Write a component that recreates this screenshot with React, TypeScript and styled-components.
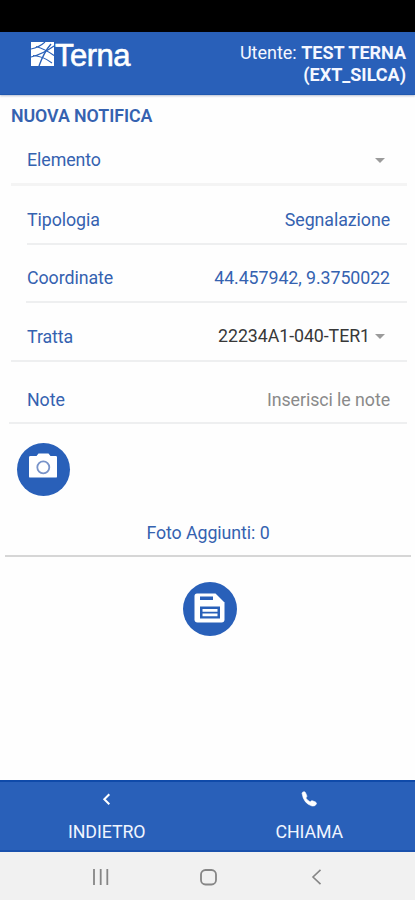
import React from "react";
import styled, { createGlobalStyle } from "styled-components";

const GlobalStyle = createGlobalStyle`
  * { box-sizing: border-box; }
  body { margin: 0; background: #fff; }
`;

const BLUE = "#2960b9";
const TEXT_BLUE = "#3562b0";

const Screen = styled.div`
  display: flex;
  flex-direction: column;
  width: 415px;
  height: 900px;
  overflow: hidden;
  background: #fefefe;
  color: ${TEXT_BLUE};
  font-family: Roboto, "Liberation Sans", sans-serif;
  font-size: 17.8px;
  line-height: 20px;
  letter-spacing: -0.07px;
  white-space: nowrap;
`;

const StatusBar = styled.div`
  flex: none;
  height: 32px;
  background: #000;
`;

const Header = styled.header`
  flex: none;
  display: flex;
  justify-content: space-between;
  height: 63px;
  padding: 10px 9px 0 31px;
  background: ${BLUE};
  border-bottom: 1px solid #2058b0;
  box-shadow: 0 1px 2px rgba(50, 70, 120, 0.35);
  color: #f4f7ff;
`;

const Brand = styled.div`
  display: flex;
  align-items: flex-start;
  gap: 1px;
  height: 26px;
  color: #fff;

  svg { display: block; }
`;

const BrandName = styled.span`
  font-family: "Liberation Sans", Arial, sans-serif;
  font-size: 31px;
  line-height: 27px;
  letter-spacing: -0.5px;
  -webkit-text-stroke: 0.6px #fff;
`;

const User = styled.div`
  text-align: right;
  font-size: 18px;
  line-height: 21.5px;
  letter-spacing: 0;

  b { font-weight: 700; }
`;

const Title = styled.h1`
  flex: none;
  height: 40px;
  margin: 0;
  padding: 10px 11px 0;
  font-size: 17.8px;
  font-weight: 600;
  line-height: 21px;
`;

const Row = styled.div<{ $height: number; $left: number; $drop?: number; $thick?: boolean }>`
  flex: none;
  display: flex;
  justify-content: space-between;
  height: ${(p) => p.$height}px;
  margin-left: ${(p) => p.$left}px;
  margin-right: 8px;
  padding: ${(p) => p.$drop ?? 23}px 17px 0 ${(p) => 27 - p.$left}px;
  border-bottom: ${(p) => (p.$thick ? 3 : 2)}px solid ${(p) => (p.$thick ? "#f4f4f4" : "#eeeff0")};
`;

const Label = styled.span<{ $drop?: number }>`
  padding-top: ${(p) => p.$drop ?? 0}px;
`;

const Value = styled.span<{ $color?: string }>`
  display: flex;
  align-items: center;
  height: 20px;
  color: ${(p) => p.$color ?? TEXT_BLUE};
`;

const Caret = styled.i`
  width: 0;
  height: 0;
  margin: 0 5px 0 5px;
  border: 5px solid transparent;
  border-top-color: #9b9b9b;
  border-bottom: 0;
`;

const RoundButton = styled.button<{ $size: number }>`
  display: grid;
  place-items: center;
  width: ${(p) => p.$size}px;
  height: ${(p) => p.$size}px;
  padding: 0;
  border: 0;
  border-radius: 50%;
  background: ${BLUE};
`;

const PhotoArea = styled.div`
  flex: none;
  height: 99px;
  padding: 19px 0 0 17px;
`;

const PhotoCount = styled.div`
  flex: none;
  height: 34px;
  margin: 0 4px 0 5px;
  border-bottom: 2px solid #d6d6d6;
  text-align: center;
`;

const SaveArea = styled.div`
  flex: 1;
  display: flex;
  justify-content: center;
  align-items: flex-start;
  padding: 25px 0 0 5px;
`;

const Footer = styled.footer`
  flex: none;
  display: flex;
  height: 72px;
  padding: 0 5px;
  background: ${BLUE};
  border-top: 2px solid #0f4aa9;
  border-bottom: 2px solid #1a51ad;
  color: #f0f5ff;
`;

const Action = styled.div`
  flex: 1;
  display: flex;
  flex-direction: column;
  align-items: center;
  gap: 14px;
  padding: 8px 0 0 1px;

  svg { display: block; }
`;

const SystemBar = styled.nav`
  flex: none;
  display: flex;
  gap: 91px;
  height: 48px;
  padding: 17px 0 0 92px;
  background: #f1f1f1;

  svg:last-child { margin-left: 3px; }
`;

export default function App() {
  return (
    <Screen>
      <GlobalStyle />
      <StatusBar />
      <Header>
        <Brand>
          <svg width="23" height="24" viewBox="0 0 23 24">
            <path d="M0 0h23v24H0z" fill="#fff" />
            <g fill="none" stroke={BLUE} strokeWidth="1.1">
              <path d="M0 7Q8 5.500 14 0M0 15Q12 12 23 4M5 4.500Q14 7 23 13.500M2 13.500Q12 14 21 21" />
              <path d="M20 2Q13 10 8 24" strokeWidth="1.400" />
            </g>
          </svg>
          <BrandName>Terna</BrandName>
        </Brand>
        <User>
          Utente: <b>TEST TERNA</b>
          <br />
          <b>(EXT_SILCA)</b>
        </User>
      </Header>
      <Title>NUOVA NOTIFICA</Title>
      <Row $height={51} $left={11} $drop={15} $thick>
        <Label>Elemento</Label>
        <Value><Caret /></Value>
      </Row>
      <Row $height={59} $left={27} $drop={24}>
        <Label>Tipologia</Label>
        <Value>Segnalazione</Value>
      </Row>
      <Row $height={58} $left={26}>
        <Label>Coordinate</Label>
        <Value>44.457942, 9.3750022</Value>
      </Row>
      <Row $height={59} $left={11}>
        <Label $drop={1}>Tratta</Label>
        <Value $color="#383838"><span>22234A1-040-TER1</span><Caret /></Value>
      </Row>
      <Row $height={62} $left={9} $drop={28}>
        <Label>Note</Label>
        <Value $color="#8a8a8a">Inserisci le note</Value>
      </Row>
      <PhotoArea>
        <RoundButton $size={53} aria-label="Fotocamera">
          <svg width="53" height="53" viewBox="0 0 53 53">
            <path d="M13.500 13h6l2-2.600h10l2 2.600h5.300q1.200 0 1.200 1.200v19.200q0 1.200-1.200 1.200H13.200q-1.200 0-1.200-1.200V14.200q0-1.200 1.500-1.200Z" fill="#fff" />
            <circle cx="26.300" cy="24.300" r="6" fill="none" stroke="#7893c9" strokeWidth="1.800" />
          </svg>
        </RoundButton>
      </PhotoArea>
      <PhotoCount>Foto Aggiunti: 0</PhotoCount>
      <SaveArea>
        <RoundButton $size={54} aria-label="Salva">
          <svg width="54" height="54" viewBox="0 0 54 54">
            <path d="M14 11.500h18.500l9 9V37.500q0 3-3 3H14.500q-3 0-3-3V14q0-2.500 2.500-2.500Z" fill="#fff" />
            <path d="M17 14.500h13v3.500H17zM17 24.500h20v12H17z" fill={BLUE} />
            <path d="M19.500 27h15v2.800h-15zM19.500 31.500h15v2.800h-15z" fill="#fff" />
          </svg>
        </RoundButton>
      </SaveArea>
      <Footer>
        <Action>
          <svg width="18" height="18" viewBox="0 0 18 18">
            <path d="m11.300 4.300-5 5 5 5" fill="none" stroke="#fff" strokeWidth="2" />
          </svg>
          INDIETRO
        </Action>
        <Action>
          <svg width="18" height="18" viewBox="0 0 18 18">
            <path d="M2 3.200Q2.500 1.700 4 1.700q1.100 0 1.500 1l1.300 3.100q.3.900-.5 1.600l-.5.600q1.600 2.500 4.400 3.900l.8-.8q.7-.6 1.500-.3l3 1.200q1.500.7.700 2.200-1.200 2.400-4.200 1.800Q3.600 13.600 2 3.200Z" fill="#fff" stroke="#fff" strokeWidth=".6" />
          </svg>
          CHIAMA
        </Action>
      </Footer>
      <SystemBar>
        <svg width="17" height="16" viewBox="0 0 17 16" stroke="#868686" strokeWidth="1.800">
          <path d="M2 0v16M8.700 0v16M15.300 0v16" />
        </svg>
        <svg width="17" height="17" viewBox="0 0 17 17">
          <rect x="1" y="1" width="15" height="14.500" rx="4.500" fill="none" stroke="#868686" strokeWidth="1.800" />
        </svg>
        <svg width="12" height="16" viewBox="0 0 12 16">
          <path d="M9.500.8 2 8l7.500 7.200" fill="none" stroke="#868686" strokeWidth="1.600" />
        </svg>
      </SystemBar>
    </Screen>
  );
}
